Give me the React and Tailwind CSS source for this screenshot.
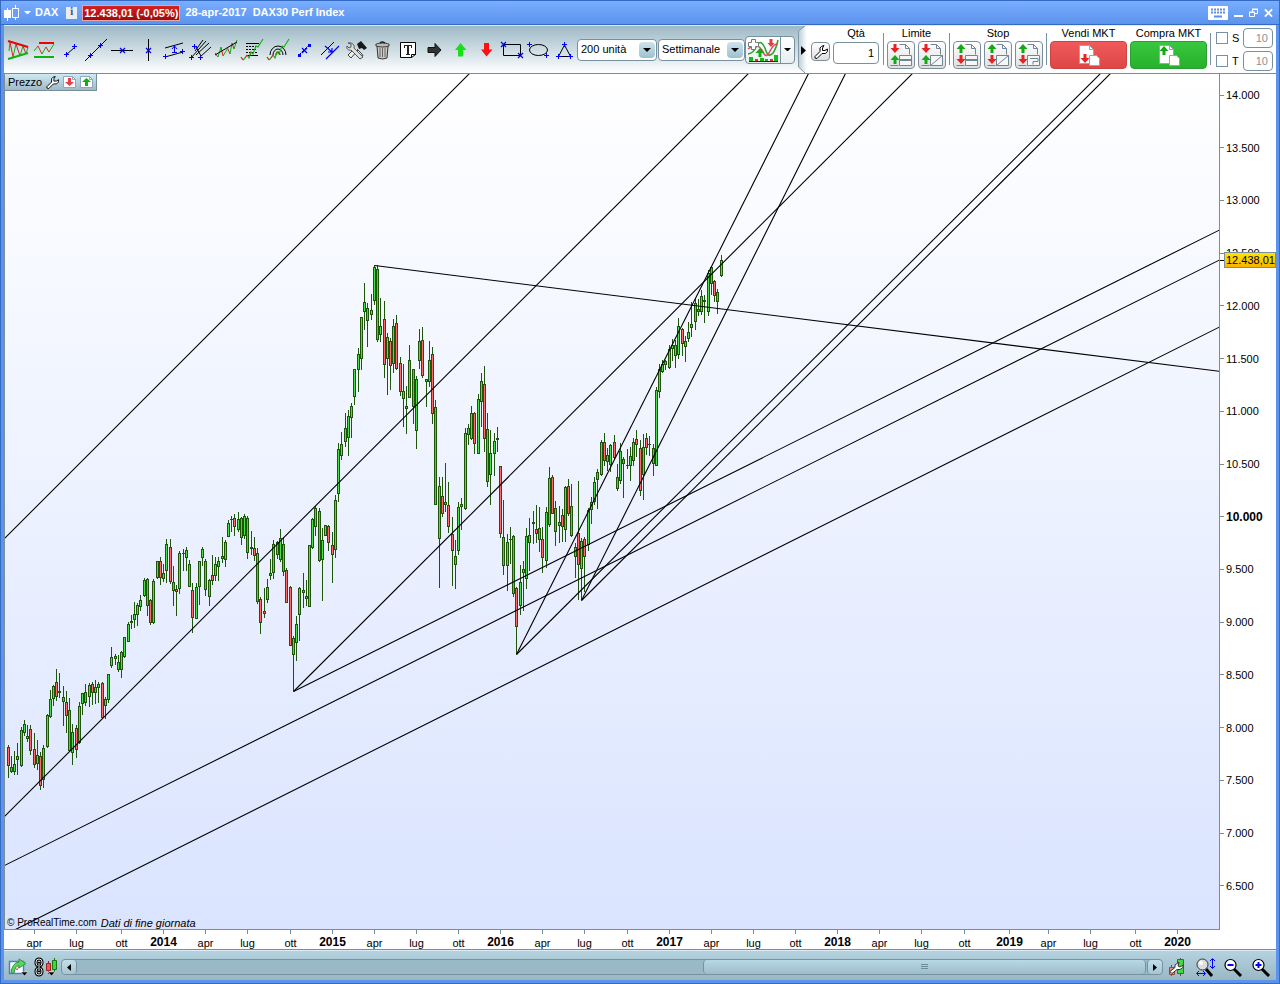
import { useState } from "react"

// x, high, body top, body bottom, low, direction (1 = up, 0 = down)
const candles = [
  [8, 745, 747, 766, 778, 0], [11, 756, 767, 772, 773, 0], [14, 751, 764, 772, 775, 1], [17, 743, 756, 760, 775, 0],
  [21, 727, 730, 766, 767, 1], [24, 720, 724, 733, 736, 1], [27, 725, 736, 739, 742, 1], [30, 725, 729, 751, 755, 0],
  [34, 733, 749, 765, 768, 0], [37, 740, 755, 764, 770, 1], [40, 752, 756, 786, 790, 0], [43, 745, 748, 780, 788, 1],
  [47, 714, 715, 747, 748, 1], [50, 690, 699, 717, 718, 1], [53, 685, 686, 699, 706, 1], [56, 669, 682, 697, 701, 0],
  [59, 673, 691, 693, 698, 0], [63, 686, 697, 702, 726, 0], [66, 691, 702, 716, 733, 0], [69, 698, 710, 751, 752, 0],
  [72, 724, 732, 753, 765, 1], [76, 725, 728, 750, 758, 0], [79, 702, 706, 743, 744, 1], [82, 693, 693, 704, 715, 1],
  [85, 684, 692, 703, 706, 0], [89, 683, 685, 697, 707, 1], [92, 682, 684, 693, 705, 0], [95, 680, 687, 693, 704, 1],
  [98, 682, 684, 688, 703, 1], [102, 682, 683, 718, 719, 0], [105, 697, 699, 706, 719, 1], [108, 674, 674, 700, 703, 1],
  [111, 647, 657, 666, 668, 1], [115, 654, 656, 659, 665, 1], [118, 655, 662, 670, 672, 1], [121, 651, 652, 670, 678, 1],
  [124, 637, 637, 657, 658, 1], [128, 622, 624, 642, 642, 1], [131, 615, 621, 623, 629, 1], [134, 602, 614, 620, 628, 1],
  [137, 603, 605, 615, 626, 1], [140, 595, 600, 607, 611, 1], [144, 578, 580, 596, 597, 1], [147, 578, 579, 606, 616, 0],
  [150, 599, 600, 623, 625, 0], [153, 579, 581, 623, 624, 1], [157, 561, 561, 578, 579, 1], [160, 557, 561, 578, 585, 0],
  [163, 564, 573, 579, 582, 1], [166, 539, 544, 571, 583, 1], [170, 539, 547, 582, 584, 0], [173, 566, 582, 591, 606, 0],
  [176, 585, 589, 592, 616, 0], [179, 551, 553, 589, 594, 1], [183, 549, 553, 554, 571, 1], [186, 547, 550, 558, 571, 1],
  [189, 560, 564, 587, 587, 0], [192, 583, 590, 618, 633, 0], [196, 583, 587, 619, 619, 1], [199, 561, 561, 587, 605, 1],
  [202, 547, 549, 558, 566, 1], [205, 559, 561, 590, 596, 0], [209, 579, 580, 597, 606, 1], [212, 555, 575, 581, 585, 0],
  [215, 557, 564, 576, 581, 1], [218, 557, 561, 567, 581, 1], [222, 537, 556, 559, 563, 1], [225, 540, 542, 560, 567, 1],
  [228, 520, 523, 537, 537, 1], [231, 516, 519, 520, 532, 1], [234, 514, 518, 527, 536, 0], [238, 512, 519, 530, 532, 1],
  [241, 517, 518, 538, 545, 0], [244, 514, 516, 536, 539, 1], [247, 516, 518, 553, 559, 0], [251, 531, 547, 549, 555, 1],
  [254, 537, 548, 556, 561, 0], [257, 548, 553, 602, 604, 0], [260, 597, 599, 623, 634, 0], [264, 588, 611, 614, 618, 0],
  [267, 579, 587, 600, 603, 1], [270, 559, 573, 576, 580, 1], [273, 540, 544, 573, 579, 1], [277, 541, 542, 555, 559, 0],
  [280, 529, 538, 560, 562, 1], [283, 537, 544, 572, 576, 0], [286, 568, 570, 603, 603, 0], [290, 586, 587, 646, 646, 0],
  [293, 636, 638, 655, 691, 1], [296, 616, 624, 643, 661, 1], [299, 587, 588, 615, 641, 1], [303, 573, 590, 593, 608, 0],
  [306, 580, 596, 599, 606, 1], [309, 545, 545, 607, 607, 1], [312, 518, 519, 548, 549, 1], [315, 506, 508, 527, 536, 1],
  [319, 508, 511, 561, 562, 0], [322, 528, 540, 560, 601, 1], [325, 525, 525, 536, 536, 1], [328, 525, 526, 543, 551, 0],
  [332, 532, 545, 555, 583, 0], [335, 495, 500, 550, 558, 1], [338, 443, 449, 494, 502, 1], [341, 432, 444, 456, 460, 1],
  [345, 413, 428, 442, 447, 1], [348, 410, 416, 438, 456, 1], [351, 403, 406, 418, 438, 1], [354, 369, 369, 397, 405, 1],
  [358, 348, 354, 370, 392, 1], [361, 317, 317, 359, 370, 1], [364, 283, 302, 312, 330, 1], [367, 303, 308, 321, 347, 0],
  [371, 294, 310, 315, 320, 1], [374, 265, 267, 301, 305, 1], [377, 265, 269, 340, 342, 0], [380, 298, 326, 335, 342, 1],
  [384, 301, 319, 365, 378, 0], [387, 333, 337, 359, 395, 1], [390, 338, 341, 366, 390, 0], [393, 319, 326, 364, 373, 1],
  [396, 315, 323, 369, 370, 0], [400, 357, 363, 392, 396, 0], [403, 364, 391, 399, 427, 1], [406, 386, 406, 409, 434, 0],
  [409, 345, 360, 398, 398, 1], [413, 369, 369, 407, 424, 0], [416, 376, 379, 431, 449, 1], [419, 329, 341, 361, 369, 1],
  [422, 327, 340, 376, 378, 0], [426, 379, 379, 382, 407, 1], [429, 341, 360, 382, 387, 1], [432, 347, 354, 414, 424, 0],
  [435, 400, 407, 505, 505, 0], [439, 477, 486, 539, 588, 1], [442, 477, 496, 514, 517, 0], [445, 463, 502, 505, 512, 1],
  [448, 482, 505, 527, 533, 0], [452, 517, 534, 551, 586, 0], [455, 540, 556, 565, 589, 0], [458, 502, 507, 551, 555, 1],
  [461, 498, 504, 507, 530, 1], [465, 428, 433, 509, 510, 1], [468, 424, 428, 435, 445, 1], [471, 406, 413, 439, 440, 1],
  [474, 412, 413, 444, 454, 0], [478, 394, 399, 454, 454, 1], [481, 373, 381, 402, 427, 1], [484, 366, 384, 439, 452, 0],
  [487, 413, 429, 482, 487, 0], [490, 430, 453, 475, 505, 1], [494, 433, 441, 454, 476, 1], [497, 427, 438, 440, 452, 1],
  [500, 466, 466, 534, 538, 0], [503, 500, 537, 566, 575, 0], [507, 534, 542, 566, 591, 1], [510, 527, 539, 540, 564, 1],
  [513, 535, 536, 594, 597, 0], [516, 587, 588, 627, 654, 0], [520, 565, 582, 606, 615, 1], [523, 561, 569, 573, 611, 1],
  [526, 528, 536, 579, 589, 1], [529, 518, 535, 543, 571, 1], [533, 511, 522, 524, 544, 1], [536, 505, 529, 534, 543, 0],
  [539, 507, 528, 540, 552, 0], [542, 527, 539, 558, 573, 0], [546, 507, 512, 561, 568, 1], [549, 467, 478, 525, 527, 1],
  [552, 475, 477, 514, 514, 0], [555, 501, 508, 532, 546, 0], [559, 506, 522, 526, 543, 1], [562, 509, 515, 527, 542, 0],
  [565, 486, 487, 530, 542, 1], [568, 479, 486, 514, 516, 0], [571, 484, 506, 536, 537, 0], [575, 543, 547, 557, 578, 0],
  [578, 481, 533, 565, 600, 0], [581, 538, 541, 569, 600, 1], [584, 537, 539, 557, 592, 0], [588, 508, 510, 545, 551, 1],
  [591, 497, 502, 510, 524, 1], [594, 477, 482, 502, 505, 1], [597, 469, 472, 480, 509, 0], [601, 440, 442, 475, 476, 1],
  [604, 433, 442, 461, 466, 0], [607, 448, 455, 462, 471, 1], [610, 444, 445, 465, 472, 1], [614, 435, 442, 458, 460, 0],
  [617, 464, 477, 489, 491, 0], [620, 443, 451, 481, 484, 1], [623, 457, 459, 464, 498, 0], [627, 449, 465, 466, 469, 1],
  [630, 447, 456, 466, 481, 1], [633, 438, 442, 461, 466, 1], [636, 430, 439, 445, 457, 0], [640, 440, 448, 491, 496, 0],
  [643, 434, 447, 475, 500, 1], [646, 433, 438, 448, 455, 0], [649, 436, 444, 445, 456, 1], [653, 444, 448, 464, 476, 0],
  [656, 387, 390, 466, 466, 1], [659, 364, 369, 392, 398, 1], [662, 360, 364, 372, 373, 1], [665, 360, 361, 365, 370, 1],
  [669, 345, 349, 368, 369, 1], [672, 339, 345, 349, 361, 1], [675, 340, 345, 356, 368, 1], [678, 318, 326, 355, 359, 1],
  [682, 328, 329, 344, 356, 0], [685, 336, 341, 347, 362, 1], [688, 322, 332, 339, 342, 1], [691, 302, 324, 328, 337, 0],
  [695, 298, 303, 322, 330, 1], [698, 299, 309, 312, 316, 1], [701, 290, 296, 312, 315, 1], [704, 295, 300, 302, 323, 1],
  [708, 270, 273, 312, 316, 1], [711, 266, 267, 284, 295, 0], [714, 280, 281, 296, 302, 0], [717, 289, 292, 302, 314, 0],
  [721, 255, 260, 276, 277, 1],
]

const trendLines = [
  [4, 538, 469, 73],
  [4, 816, 748, 73],
  [293, 691, 912, 73],
  [293, 691, 1220, 229],
  [4, 865, 1220, 259],
  [13, 930, 1220, 326],
  [374, 265, 1220, 371],
  [516, 654, 808, 73],
  [516, 654, 1100, 73],
  [581, 600, 845, 73],
  [581, 600, 1110, 73],
]

const prices = [
  "14.000", "13.500", "13.000", "12.500", "12.000", "11.500", "11.000", "10.500",
  "10.000", "9.500", "9.000", "8.500", "8.000", "7.500", "7.000", "6.500",
]

// label and distance to the next tick
const dates = [
  ["apr", 42], ["lug", 45], ["ott", 42], ["2014", 42], ["apr", 42], ["lug", 43], ["ott", 42],
  ["2015", 42], ["apr", 42], ["lug", 42], ["ott", 42], ["2016", 42], ["apr", 42], ["lug", 43], ["ott", 42],
  ["2017", 42], ["apr", 42], ["lug", 42], ["ott", 42], ["2018", 42], ["apr", 42], ["lug", 43], ["ott", 45],
  ["2019", 39], ["apr", 42], ["lug", 45], ["ott", 42], ["2020", 42],
]

const BLUE = "#0000ff"
const RED = "#e81c1c"
const GREEN = "#12b012"

function Plus({ x, y }) {
  return <path d={`M${x - 2} ${y + 0.5}h5M${x + 0.5} ${y - 2}v5`} stroke={BLUE} shapeRendering="crispEdges" />
}

function Cross({ x, y }) {
  return <path d={`M${x - 2} ${y - 2}l5 5M${x + 3} ${y - 2}l-5 5`} stroke={BLUE} strokeWidth="1.2" />
}

const zig = (
  <>
    <path d="M2 20l2 3M6 21l2-3M11 18l1-3" stroke={RED} strokeWidth="1.3" />
    <path d="M4 23l2-2M8 18l2 3l2-6l2 2l3-8l2 1l5-8" stroke={GREEN} strokeWidth="1.1" />
  </>
)

function ArrowUp({ x, y, fill = "#14a814" }) {
  return <path d={`M${x} ${y}l4.5 5h-3v4h-3v-4h-3z`} fill={fill} />
}

function ArrowDown({ x, y, fill = "#e62222" }) {
  return <path d={`M${x} ${y + 9}l4.5-5h-3v-4h-3v4h-3z`} fill={fill} />
}

const tools = [
  ["Triangoli", <>
    <path d="M5 5l3 15M11 7l4 12M18 9l3 8" stroke={RED} />
    <path d="M4 14l1-9M8 20l3-13M15 19l3-10M21 17l2-7" stroke={GREEN} />
    <path d="M3 4l20 6" stroke="#f00000" strokeWidth="2" />
    <path d="M3 22l20-6" stroke={GREEN} strokeWidth="2" />
  </>],
  ["Supporti e resistenze", <>
    <path d="M3 14l4-5M11 17l4-7M18 15l5-8" stroke={GREEN} />
    <path d="M7 9l4 8M15 10l3 5" stroke={RED} />
    <path d="M8 6h15" stroke="#f00000" strokeWidth="2" />
    <path d="M3 20h20" stroke={GREEN} strokeWidth="2" />
  </>],
  ["Segmento", <><path d="M9 18l9-8" stroke="#000" /><Plus x={9} y={17} /><Plus x={17} y={9} /></>],
  ["Retta", <><path d="M2 24L24 2" stroke="#000" /><Plus x={7} y={18} /><Plus x={17} y={8} /></>],
  ["Orizzontale", <><path d="M2 13.5h22" stroke="#000" /><Cross x={13} y={13} /></>],
  ["Verticale", <><path d="M13.5 2v22" stroke="#000" /><Cross x={13} y={13} /></>],
  ["Canale", <>
    <path d="M4 11l18-5M4 20l18-5" stroke="#000" />
    <Plus x={4} y={19} /><Plus x={21} y={14} />
    <path d="M13.5 9v7M11 15.500h5M11 12l2.500-3l2.500 3" stroke={BLUE} />
  </>],
  ["Forchetta", <>
    <path d="M4 21L19 4M8 14L16 3M13 20L24 10M9 18L22 6M9 10l5 9" stroke="#000" />
    <Plus x={7} y={9} /><Plus x={4} y={20} /><Plus x={13} y={20} />
  </>],
  ["Regressione", <>
    <path d="M2 16l3 4M8 10l2 9M15 12l2 5M19 6l2 6" stroke={RED} />
    <path d="M5 20l3-10M10 19l5-8M17 17l2-11M21 12l3-9" stroke={GREEN} />
    <path d="M2 18L24 5" stroke="#000" />
  </>],
  ["Fibonacci", <>
    <path d="M7 6.500h13M7 18.500h12" stroke="#000" />
    <path d="M7 9.500h12M7 12.500h10M7 15.500h12" stroke="#000" strokeDasharray="2 1" />
    {zig}
  </>],
  ["Archi di Fibonacci", <>
    <path d="M5 18a8 9 0 0 1 16 0M8 18a5 6 0 0 1 10 0M11 18a2 3 0 0 1 4 0" stroke="#000" />
    {zig}
  </>],
  ["Proiezione", <>
    <path d="M8 18L18 8" stroke="#000" strokeDasharray="3 1" />
    <path d="M7 17h3v3h-3zM17 7h3v3h-3z" fill={BLUE} /><Cross x={13} y={13} />
  </>],
  ["Parallela", <>
    <path d="M4 18L17 5" stroke="#000" />
    <path d="M9 22L22 9M8 9l7 6M15 11v4h-4" stroke={BLUE} strokeWidth="1.2" />
  </>],
  ["Impostazioni disegno", <>
    <path d="M10 13L5 18l3 3l7-8M13 13l5 7l2-1l-1-2l-5-5" fill="#eee" stroke="#444" />
    <path d="M5 6l3 1v3l-2 1l-2-2c-1 3 2 5 4 4l9 9l3-2L11 11c1-3-2-6-6-5z" fill="#ddd" stroke="#555" />
    <path d="M14 7l4-3l6 7l-3 2l-2-2l-3 1z" fill="#181818" />
  </>],
  ["Elimina", <>
    <path d="M8 9h11l-1 12q-4 2-9 0z" fill="#c9c9c2" stroke="#333" />
    <path d="M11 11v9M13.500 11v9M16 11v9" stroke="#666" />
    <ellipse cx="13.5" cy="8" rx="7" ry="2" fill="#bdbdb5" stroke="#333" />
    <path d="M11 6q2-2 5 0" stroke="#222" strokeWidth="1.500" />
  </>],
  ["Testo", <>
    <path d="M5.500 5.500h15v12l-4 3h-11z" fill="#fff" stroke="#000" />
    <path d="M20.500 17.500h-4v3" stroke="#000" />
    <path d="M9 8.500h8M9.500 8v3M16.500 8v3M11 17.500h4" stroke="#222" /><path d="M13 8v10" stroke="#222" strokeWidth="2" />
  </>],
  ["Freccia", <path d="M7 10.500h7v-4l6 6.500l-6 6.500v-4H7z" fill="#333" stroke="#111" />],
  ["Freccia su", <path d="M13.500 6l6 7h-3.500v6.500h-5V13H8z" fill="#18e018" />],
  ["Freccia giù", <path d="M13.500 19.500l6-7h-3.500V6h-5v6.500H8z" fill="#ff1010" />],
  ["Rettangolo", <><path d="M4.500 7.500h17v11h-17z" stroke="#000" /><Cross x={4} y={7} /><Cross x={21} y={18} /></>],
  ["Ellisse", <><ellipse cx="13.5" cy="13" rx="9" ry="5.5" stroke="#000" /><Plus x={4} y={7} /><Plus x={21} y={18} /></>],
  ["Triangolo", <>
    <path d="M13.500 8L7.500 19.500h12z" stroke="#000" />
    <Plus x={13} y={7} /><Plus x={7} y={19} /><Plus x={19} y={19} />
  </>],
]

function Wrench({ className }) {
  return (
    <svg viewBox="0 0 14 14" className={className} fill="none">
      <path
        d="M1 11.500L6 6.500V3q1-2 4-2.500L8.500 3v2.500H11L13.500 4q.5 3-2 4.500H8L3 13.500Q0 13.500 1 11.500z"
        fill="#fff"
        stroke="#000"
      />
    </svg>
  )
}

function Caret({ className }) {
  return (
    <svg viewBox="0 0 8 4" className={className}>
      <path d="M0 0h8L4 4z" fill="currentColor" />
    </svg>
  )
}

function ToolSelect({ label, options, className }) {
  return (
    <div className={"relative h-[22px] " + className}>
      <select
        aria-label={label}
        className="h-full w-full appearance-none rounded border border-[#7891a0] bg-white pl-[3px] text-[11px] text-black outline-none"
      >
        {options.map((o) => <option key={o}>{o}</option>)}
      </select>
      <span className="pointer-events-none absolute top-[3px] right-[2px] flex h-4 w-4 items-center justify-center rounded-sm bg-linear-to-b from-[#cfe3ec] to-[#9cc0d0]">
        <Caret className="w-2 text-black" />
      </span>
    </div>
  )
}

function OrderButton({ label, top, bottom, mark }) {
  return (
    <button aria-label={label} className="h-7 w-7 rounded border border-[#7b8f9b] bg-linear-to-b from-white to-[#dfdfdf]">
      <svg viewBox="1 1 26 26" className="h-[26px] w-[26px]" fill="none">
        <path d="M12.500 3.500h6l4 4v6M18.500 3.500v4h4" stroke="#6f8794" />
        <path d="M12.500 14.500h12v10h-12zM3.500 24.500h8" fill="#f6f6f6" stroke="#6f8794" />
        {mark === "line" && <path d="M12.500 18.500h12M12.500 19.500h12" stroke="#6f8794" />}
        {mark === "slash" && <path d="M12.500 24.500l12-10" stroke="#6f8794" />}
        {mark === "step" && <path d="M15 17.500h8v3h-5v3" stroke="#6f8794" />}
        {top === "up" ? <ArrowUp x={8} y={3} /> : <ArrowDown x={8} y={3} />}
        {bottom === "up" ? <ArrowUp x={8} y={14} /> : <ArrowDown x={8} y={14} />}
      </svg>
    </button>
  )
}

function MarketButton({ label, side }) {
  return (
    <div className="flex flex-col items-center">
      <span className="h-[15px] leading-[15px]">{label}</span>
      <button
        aria-label={label}
        className={
          side === "sell"
            ? "flex h-7 w-[77px] items-center justify-center rounded border border-[#c64646] bg-linear-to-b from-[#f15a5a] to-[#de4646]"
            : "flex h-7 w-[77px] items-center justify-center rounded border border-[#2a9e30] bg-linear-to-b from-[#38c83e] to-[#27b02c]"
        }
      >
        <svg viewBox="0 0 24 24" className="h-6 w-6" fill="none">
          <path d="M2.500 2.500h10l4 4v14h-14z" fill="#fff" stroke="#9aa7ad" />
          <path d="M12.500 2.500v4h4" stroke="#9aa7ad" />
          {side === "sell" ? <ArrowDown x={8} y={11} /> : <ArrowUp x={7} y={3} />}
          <path d="M12.500 12.500h7l3 3v7h-10z" fill="#fff" stroke="#9aa7ad" />
        </svg>
      </button>
    </div>
  )
}

function Divider() {
  return <div className="mt-[7px] h-8 w-px bg-[#7891a0]" />
}

function LevelField({ id, name }) {
  return (
    <div className="flex h-5 items-center">
      <input
        type="checkbox"
        id={id}
        className="h-3 w-3 appearance-none border border-[#7891a0] bg-white checked:bg-[#7891a0]"
      />
      <label htmlFor={id} className="w-[15px] pl-1">{name}</label>
      <input
        aria-label={"Valore " + name}
        defaultValue="10"
        className="h-5 w-[30px] rounded border border-[#7891a0] bg-white pr-1 text-right text-[#8a9298] outline-none"
      />
    </div>
  )
}

function TitleBar() {
  return (
    <header className="flex h-6 shrink-0 items-center border-b border-[#3469c4] bg-linear-to-b from-[#78adff] to-[#5c93ec] pr-[6px] pl-[3px] text-[11px] font-bold text-white">
      <svg viewBox="0 0 16 16" className="h-4 w-4" fill="none">
        <path d="M3.500 3v13M11.500 0v15" stroke="#fff" />
        <path d="M0 5h7v8H0z" fill="#fff" />
        <path d="M8.500 3.500h6v9h-6z" fill="#6a9ff4" stroke="#fff" />
      </svg>
      <Caret className="mx-1 w-[7px]" />
      <span>DAX</span>
      <span className="ml-2 flex h-3 w-[11px] items-center justify-center bg-[#e9eef5] font-serif text-[#4b5a78]">i</span>
      <span className="mr-[5px] ml-[5px] border border-[#e9a5a5] bg-linear-to-b from-[#d42121] to-[#9d0a0a] px-px leading-[14px] whitespace-nowrap">
        12.438,01 (-0,05%)
      </span>
      <h1>28-apr-2017&nbsp; DAX30 Perf Index</h1>
      <div className="ml-auto flex items-center gap-[6px]">
        <button aria-label="Tastiera">
          <svg viewBox="0 0 20 14" className="h-[14px] w-5">
            <rect width="20" height="14" rx="1" fill="#fff" />
            <path d="M3 3.500h14M3 6.500h14" stroke="#5b8fe8" strokeDasharray="2 1" strokeWidth="2" />
            <path d="M6 10.500h8" stroke="#5b8fe8" strokeWidth="2" />
          </svg>
        </button>
        <button aria-label="Riduci">
          <svg viewBox="0 0 9 10" className="h-[10px] w-[9px]"><path d="M0 8h9" stroke="#fff" strokeWidth="2" /></svg>
        </button>
        <button aria-label="Ripristina">
          <svg viewBox="0 0 9 10" className="h-[10px] w-[9px]" fill="none" stroke="#fff">
            <path d="M3.500 4V1.500h5v4H6M3 1h6M.5 4.500h5v4h-5zM0 4h6" />
          </svg>
        </button>
        <button aria-label="Chiudi">
          <svg viewBox="0 0 10 10" className="h-[10px] w-[9px]"><path d="M1 1l8 8M9 1L1 9" stroke="#fff" strokeWidth="2" /></svg>
        </button>
      </div>
    </header>
  )
}

function Toolbar() {
  return (
    <div className="flex h-[49px] shrink-0 border-t border-b border-t-[#dcebf5] border-b-[#788f99] bg-linear-to-b from-[#9db9c6] to-white text-[11px]">
      <div className="flex flex-1 items-center pl-px">
        {tools.map(([name, icon]) => (
          <button key={name} aria-label={name} className="h-[26px] w-[26px]">
            <svg viewBox="0 0 26 26" className="h-[26px] w-[26px]" fill="none">{icon}</svg>
          </button>
        ))}
        <ToolSelect label="Unità" options={["200 unità", "500 unità"]} className="w-[80px]" />
        <ToolSelect label="Periodo" options={["Settimanale", "Giornaliero"]} className="ml-px w-[87px]" />
        <div className="flex h-7 w-[50px] rounded border border-[#7891a0] bg-linear-to-b from-white to-[#e8eef1]">
          <button aria-label="Indicatori" className="flex-1">
            <svg viewBox="0 0 34 26" className="h-[26px] w-[34px]" fill="none">
              <path d="M2 17q6-1 9-9q4-6 8 3q3 11 8 5q3-4 5-13" stroke="#26a526" strokeWidth="1.5" />
              <path d="M2 12q6-4 9-3q4 1 7 8q3 4 6-3q4-8 8-7" stroke="#df4d5b" strokeWidth="1.5" />
              <path d="M5.500 2.500h4v3h3v4h-3v3h-4v-3h-3v-4h3z" fill="#fff" stroke="#777" />
              <ArrowUp x={14} y={11} /><path d="M25 10l3.500-4h-2V2h-3v4h-2z" fill="#e83a3a" />
              <path d="M3 20h4v4H3zM14 21h4v3h-4zM19 22h3v2h-3zM28 18h4v6h-4z" fill="#17ba17" />
              <path d="M9 22h3v2H9zM24 22h3v2h-3z" fill="#df3434" />
              <path d="M3 24.500h29" stroke="#1212b8" />
            </svg>
          </button>
          <button aria-label="Altri indicatori" className="flex w-[14px] items-center justify-center border-l border-[#7891a0]">
            <Caret className="w-[7px]" />
          </button>
        </div>
      </div>

      <div className="flex shrink-0 bg-white">
        <button aria-label="Comprimi" className="w-[11px]">
          <svg viewBox="0 0 11 47" className="h-[47px] w-[11px]">
            <defs>
              <linearGradient id="bar" x1="0" y1="0" x2="0" y2="1">
                <stop stopColor="#9db9c6" /><stop offset="1" stopColor="#fff" />
              </linearGradient>
              <linearGradient id="grip" x1="0" y1="0" x2="1" y2="0">
                <stop stopColor="#a5bfcb" /><stop offset="1" stopColor="#fff" />
              </linearGradient>
            </defs>
            <rect width="11" height="47" fill="url(#grip)" />
            <path d="M0 0h9L2.500 5v36L9 47H0z" fill="url(#bar)" />
            <path d="M9 0L2.500 5v36L9 47" fill="none" stroke="#8199a5" />
            <path d="M5 20v9l5-4.500z" />
          </svg>
        </button>
        <button aria-label="Configura ordini" className="mt-4 ml-1 flex h-[19px] w-[19px] items-center justify-center rounded border border-[#7b8f9b] bg-linear-to-b from-white to-[#dfdfdf]">
          <Wrench className="h-[14px] w-[14px]" />
        </button>
        <div className="ml-[3px] flex w-[46px] flex-col items-center">
          <label htmlFor="qty" className="h-4 leading-[15px]">Qtà</label>
          <input id="qty" defaultValue="1" className="h-[22px] w-full rounded border border-[#7891a0] bg-white pr-1 text-right outline-none" />
        </div>
        <div className="flex gap-[3px] pl-1">
          <Divider />
          <div className="flex flex-col items-center">
            <span className="h-[15px] leading-[15px]">Limite</span>
            <div className="flex gap-[3px]">
              <OrderButton label="Limite doppio" top="down" bottom="up" mark="line" />
              <OrderButton label="Limite a sfioro" top="down" bottom="up" mark="slash" />
            </div>
          </div>
          <Divider />
          <div className="flex flex-col items-center">
            <span className="h-[15px] leading-[15px]">Stop</span>
            <div className="flex gap-[3px]">
              <OrderButton label="Stop doppio" top="up" bottom="down" mark="line" />
              <OrderButton label="Stop a sfioro" top="up" bottom="down" mark="slash" />
              <OrderButton label="Stop dinamico" top="up" bottom="down" mark="step" />
            </div>
          </div>
          <Divider />
          <MarketButton label="Vendi MKT" side="sell" />
          <MarketButton label="Compra MKT" side="buy" />
          <Divider />
        </div>
        <div className="flex flex-col gap-[3px] pt-0.5 pr-[3px] pl-[5px]">
          <LevelField id="level-s" name="S" />
          <LevelField id="level-t" name="T" />
        </div>
      </div>
    </div>
  )
}

function SmallDoc({ children, label }) {
  return (
    <button aria-label={label} className="h-3 w-[13px]">
      <svg viewBox="0 0 13 12" className="h-3 w-[13px]">
        <path d="M.5.5h9l3 3v8H.5z" fill="#fff" stroke="#8fa8bd" />
        <path d="M9.500.5v3h3" fill="none" stroke="#8fa8bd" />
        {children}
      </svg>
    </button>
  )
}

function PriceChart() {
  return (
    <div className="relative min-w-0 flex-1 border-r border-b border-l border-[#788f99] bg-linear-to-b from-white to-[#dae4ff]">
      <svg viewBox="5 74 1214 855" preserveAspectRatio="none" className="absolute inset-0 h-full w-full">
        <g shapeRendering="crispEdges">
          {candles.map(([x, high, top, bottom, low, up]) => (
            <g key={x}>
              <rect x={x} y={high} width="1" height={Math.max(low - high, 1)} fill="#1d5608" />
              <rect x={x - 1} y={top} width="3" height={Math.max(bottom - top, 1)} fill="#1d5608" />
              {bottom - top > 2 && (
                <rect x={x} y={top + 1} width="1" height={bottom - top - 2} fill={up ? "#4be04b" : "#ff6b6b"} />
              )}
            </g>
          ))}
        </g>
        <g stroke="#000" strokeWidth="1.1" transform="translate(.5 .5)">
          {trendLines.map(([x1, y1, x2, y2]) => (
            <line key={`${x1}-${x2}-${y1}`} x1={x1} y1={y1} x2={x2} y2={y2} />
          ))}
        </g>
      </svg>
      <div className="absolute top-0 left-0 flex h-[17px] items-center border-r border-b border-[#788f99] bg-linear-to-b from-[#cdeaf4] to-[#9fb9c6] pr-[3px] pl-[3px] text-[11px]">
        <span>Prezzo</span>
        <button aria-label="Impostazioni prezzo" className="ml-1">
          <Wrench className="h-[13px] w-[13px]" />
        </button>
        <div className="ml-1 flex gap-1">
          <SmallDoc label="Sposta giù"><path d="M6.500 10L11 6H8V2H5v4H2z" fill="#e83c46" /></SmallDoc>
          <SmallDoc label="Sposta su"><path d="M6.500 2L11 6H8v4H5V6H2z" fill="#12b012" /></SmallDoc>
        </div>
      </div>
      <p className="absolute bottom-0 left-0 flex gap-1 pl-0.5 text-[11px] leading-3">
        <span className="text-[10px]">© ProRealTime.com</span>
        <em>Dati di fine giornata</em>
      </p>
    </div>
  )
}

function PriceAxis() {
  return (
    <div className="relative flex w-14 shrink-0 flex-col justify-between bg-white pt-[14px] pb-[37px] text-[11px] leading-[14px]">
      {prices.map((p) => (
        <div key={p} className="flex h-[14px] items-center gap-[2px]">
          <span className="h-px w-1 bg-[#788f99]" />
          <span className={p === "10.000" ? "text-xs font-bold" : ""}>{p}</span>
        </div>
      ))}
      <div className="absolute top-[178px] right-0 left-0 flex items-center">
        <span className="h-px w-1 bg-black" />
        <span className="flex h-4 flex-1 items-center border border-[#788f99] bg-linear-to-b from-[#ffe400] to-[#f5b400] pl-px">
          12.438,01
        </span>
      </div>
    </div>
  )
}

function TimeAxis() {
  return (
    <div className="flex h-5 shrink-0 border-b border-[#788f99] bg-white pr-[57px] text-[11px]">
      <div className="grow-[30] basis-0" />
      {dates.map(([label, gap], i) => (
        <div key={i} className="min-w-0 basis-0" style={{ flexGrow: gap }}>
          <div className="flex w-px flex-col items-center">
            <span className="h-1 w-px shrink-0 bg-[#788f99]" />
            <span className={label.length === 4 ? "text-xs leading-[17px] font-bold" : "leading-[18px]"}>{label}</span>
          </div>
        </div>
      ))}
    </div>
  )
}

function Lens({ children }) {
  return (
    <svg viewBox="0 0 20 20" className="h-5 w-5" fill="none">
      <path d="M11 12l7 7" stroke="#000" strokeWidth="3" />
      <circle cx="7.500" cy="8" r="5.500" fill="#fff" stroke="#000" strokeWidth="1.200" />
      {children}
    </svg>
  )
}

function BottomBar() {
  const [offset, setOffset] = useState(0)
  return (
    <footer className="flex h-[30px] shrink-0 items-center border-t border-[#dcebf5] bg-linear-to-b from-[#b4d2df] to-[#9ab8c4] pt-[3px] pr-[5px] pl-1">
      <button aria-label="Esporta">
        <svg viewBox="0 0 20 20" className="h-5 w-5" fill="none">
          <path d="M1.500 4.500h14v12h-14z" fill="#fff" stroke="#4a7fd0" strokeWidth="1.500" />
          <path d="M3 14l3-5l3 4l3-5" stroke="#df4d5b" />
          <path d="M3 16q1-10 8-11V2l7 4.500l-7 4.500V8.500Q7 9 6 16z" fill="#5fd35f" stroke="#2a9a3a" />
          <path d="M13 15h7l-3.500 4z" fill="#000" stroke="#fff" strokeWidth=".5" />
        </svg>
      </button>
      <button aria-label="Collega" className="ml-[6px]">
        <svg viewBox="0 0 10 20" className="h-5 w-[10px]" fill="none">
          <rect x="2" y="2" width="6" height="7" rx="3" stroke="#000" strokeWidth="3" />
          <rect x="2" y="11" width="6" height="7" rx="3" stroke="#000" strokeWidth="3" />
          <rect x="2" y="2" width="6" height="7" rx="3" stroke="#eee" />
          <rect x="2" y="11" width="6" height="7" rx="3" stroke="#eee" />
          <path d="M5 5v10" stroke="#000" strokeWidth="3" /><path d="M5 6v8" stroke="#eee" />
        </svg>
      </button>
      <button aria-label="Stile grafico" className="ml-px">
        <svg viewBox="0 0 13 20" className="h-5 w-[13px]" fill="none">
          <path d="M3.500 4v13" stroke="#a32020" /><path d="M1.500 6.500h4v7h-4z" fill="#e85a5a" stroke="#a32020" />
          <path d="M9.500 1v14" stroke="#187818" /><path d="M7.500 3.500h4v9h-4z" fill="#3ed63e" stroke="#187818" />
          <path d="M3 15h7l-3.500 4z" fill="#000" stroke="#fff" strokeWidth=".5" />
        </svg>
      </button>
      <div className="ml-[3px] flex h-4 flex-1 rounded border border-[#7891a0] bg-[#9ab9c6]">
        <button
          aria-label="Indietro"
          onClick={() => setOffset(offset + 10)}
          className="flex w-[15px] items-center justify-center rounded-sm border-r border-[#7891a0] bg-linear-to-b from-[#c3dfea] to-[#a5c6d4]"
        >
          <svg viewBox="0 0 4 7" className="h-[7px] w-1"><path d="M4 0v7L0 3.500z" /></svg>
        </button>
        <div className="flex flex-1 justify-end" style={{ paddingRight: offset }}>
          <div className="flex w-[41.4%] items-center justify-center rounded-sm border-x border-[#7891a0] bg-linear-to-b from-[#b8d8e6] to-[#9dbdcb]">
            <svg viewBox="0 0 7 6" className="h-[6px] w-[7px]"><path d="M0 .5h7M0 2.500h7M0 4.500h7" stroke="#6e8c9c" /></svg>
          </div>
        </div>
        <button
          aria-label="Avanti"
          onClick={() => setOffset(Math.max(offset - 10, 0))}
          className="ml-px flex w-[15px] items-center justify-center rounded-sm border-l border-[#7891a0] bg-linear-to-b from-[#c3dfea] to-[#a5c6d4]"
        >
          <svg viewBox="0 0 4 7" className="h-[7px] w-1"><path d="M0 0v7l4-3.500z" /></svg>
        </button>
      </div>
      <div className="ml-1 flex gap-2">
        <button aria-label="Configura grafico">
          <svg viewBox="0 0 20 20" className="h-5 w-5" fill="none">
            <path d="M4.500 8v11M13.500 1v18" stroke="#555" />
            <path d="M2.500 10.500h5v7h-5z" fill="#e58a7c" stroke="#8d4a40" /><path d="M10.500 2.500h6v14h-6z" fill="#45d845" stroke="#257825" />
            <path d="M3 14.500l5-4V8l4-3l-1 4l2 1l3-2q1 3-3 4.500h-3l-5 4z" fill="#fff" stroke="#333" />
          </svg>
        </button>
        <button aria-label="Zoom automatico">
          <svg viewBox="0 0 20 20" className="h-5 w-5" fill="none">
            <path d="M11 12l6 7" stroke="#000" strokeWidth="3" />
            <circle cx="7.500" cy="7.500" r="5.500" fill="#ddd" stroke="#333" />
            <circle cx="6" cy="6" r="2" fill="#fff" />
            <path d="M17.500 2v9M15 4l2.500-2.500L20 4M15 9l2.500 2.500L20 9M2 16.500h8M4 14l-2.500 2.500L4 19M8 14l2.500 2.500L8 19" stroke={BLUE} />
          </svg>
        </button>
        <button aria-label="Riduci zoom"><Lens><path d="M4.500 8h6" stroke={BLUE} strokeWidth="2" /></Lens></button>
        <button aria-label="Aumenta zoom"><Lens><path d="M4.500 8h6M7.500 5v6" stroke={BLUE} strokeWidth="2" /></Lens></button>
      </div>
    </footer>
  )
}

export default function App() {
  return (
    <div className="flex h-screen flex-col border border-[#3469c4] bg-[#5c93ec] font-['Liberation_Sans',Arial,sans-serif] text-black">
      <TitleBar />
      <main className="mr-[3px] mb-[3px] ml-[3px] flex min-h-0 flex-1 flex-col">
        <Toolbar />
        <div className="flex min-h-0 flex-1">
          <PriceChart />
          <PriceAxis />
        </div>
        <TimeAxis />
        <BottomBar />
      </main>
    </div>
  )
}
